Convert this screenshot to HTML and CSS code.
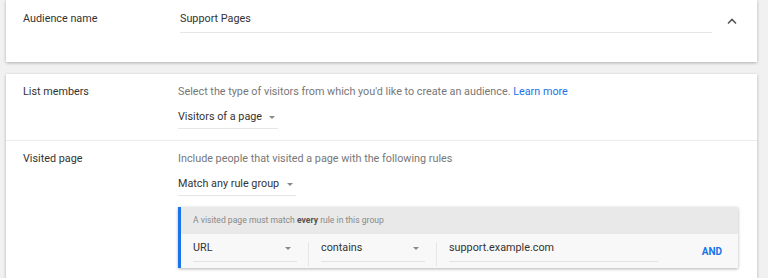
FILE: index.html
```html
<!DOCTYPE html>
<html lang="en">

<head>
    <meta charset="UTF-8">
    <meta name="viewport" content="width=device-width, initial-scale=1.0">
    <title>Audience</title>
    <link rel="stylesheet" href="styles.css">
</head>

<body>
    <div class="card card-name">
        <div class="row">
            <div class="label">Audience name</div>
            <div class="field">
                <div class="input">Support Pages</div>
            </div>
            <div class="toggle">
                <svg width="12" height="8" viewBox="0 0 12 8">
                    <path d="M2 6.5 L6 2.5 L10 6.5" fill="none" stroke="#555" stroke-width="1.6" />
                </svg>
            </div>
        </div>
    </div>

    <div class="card card-rules">
        <div class="section">
            <div class="label">List members</div>
            <div class="field">
                <div class="desc">Select the type of visitors from which you'd like to create an audience. <a class="link">Learn more</a></div>
                <div class="select select-visitors">Visitors of a page <span class="caret"></span></div>
            </div>
        </div>
        <div class="section">
            <div class="label">Visited page</div>
            <div class="field">
                <div class="desc">Include people that visited a page with the following rules</div>
                <div class="select select-match">Match any rule group <span class="caret"></span></div>

                <div class="group">
                    <div class="group-head">A visited page must match <b>every</b> rule in this group</div>
                    <div class="group-row">
                        <div class="rule rule-type">URL <span class="caret"></span></div>
                        <div class="sep"></div>
                        <div class="rule rule-op">contains <span class="caret"></span></div>
                        <div class="sep"></div>
                        <div class="rule rule-value">support.example.com</div>
                        <div class="and">AND</div>
                    </div>
                </div>
            </div>
        </div>
    </div>
</body>

</html>
```

FILE: styles.css
```css
body {
    margin: 0;
    background-color: #f1f1f1;
    font-family: Roboto, "Liberation Sans", sans-serif;
    font-size: 10.8px;
    color: #333;
    overflow: hidden;
}

.card {
    margin-left: 6px;
    width: 751px;
    background-color: #fff;
    box-shadow: 0 1px 3px rgba(0, 0, 0, 0.28);
}

.card-name {
    height: 62px;
}

.card-rules {
    margin-top: 12px;
    height: 204px;
}

.row {
    display: flex;
    align-items: flex-start;
    padding-top: 11px;
}

.label {
    width: 155px;
    padding-left: 17px;
    line-height: 16px;
    flex-shrink: 0;
}

.field {
    flex: 1;
}

.input {
    width: 532px;
    margin-left: 2px;
    line-height: 16px;
    padding-bottom: 5px;
    border-bottom: 1px solid #e6e6e6;
}

.toggle {
    width: 40px;
    padding-left: 14px;
    padding-top: 4px;
}

.section {
    display: flex;
    padding: 10px 0 11px;
    border-bottom: 1px solid #ececec;
}

.section:last-child {
    border-bottom: none;
}

.desc {
    color: #777;
    line-height: 16px;
    white-space: nowrap;
}

.link {
    color: #1a73e8;
    cursor: pointer;
}

.select {
    display: flex;
    align-items: center;
    justify-content: space-between;
    margin-top: 9px;
    line-height: 16px;
    padding-bottom: 3px;
    border-bottom: 1px solid #e6e6e6;
    white-space: nowrap;
}

.select-visitors {
    width: 100px;
}

.select-match {
    width: 118px;
}

.caret {
    width: 0;
    height: 0;
    border-left: 3.5px solid transparent;
    border-right: 3.5px solid transparent;
    border-top: 3.5px solid #888;
    margin-right: 3px;
}

.group {
    margin-top: 11px;
    width: 557px;
    border-left: 3px solid #1a73e8;
    box-shadow: 0 1px 3px rgba(0, 0, 0, 0.3);
}

.group-head {
    height: 27px;
    line-height: 27px;
    padding-left: 12px;
    background-color: #e9e9e9;
    font-size: 8.6px;
    color: #888;
    white-space: nowrap;
}

.group-head b {
    color: #555;
}

.group-row {
    display: flex;
    align-items: flex-start;
    height: 34px;
    padding-left: 12px;
    background-color: #f8f8f8;
}

.rule {
    display: flex;
    align-items: center;
    justify-content: space-between;
    margin-top: 6px;
    line-height: 16px;
    padding-bottom: 5px;
    border-bottom: 1px solid #e3e3e3;
    white-space: nowrap;
}

.rule-type,
.rule-op {
    width: 104px;
}

.rule-value {
    width: 209px;
}

.rule .caret {
    margin-right: 6px;
}

.sep {
    width: 1px;
    height: 24px;
    margin: 8px 12px 0 11px;
    background-color: #e6e6e6;
}

.and {
    margin-left: auto;
    margin-right: 16px;
    margin-top: 11px;
    line-height: 14px;
    font-size: 10px;
    font-weight: bold;
    color: #1a73e8;
}
```
